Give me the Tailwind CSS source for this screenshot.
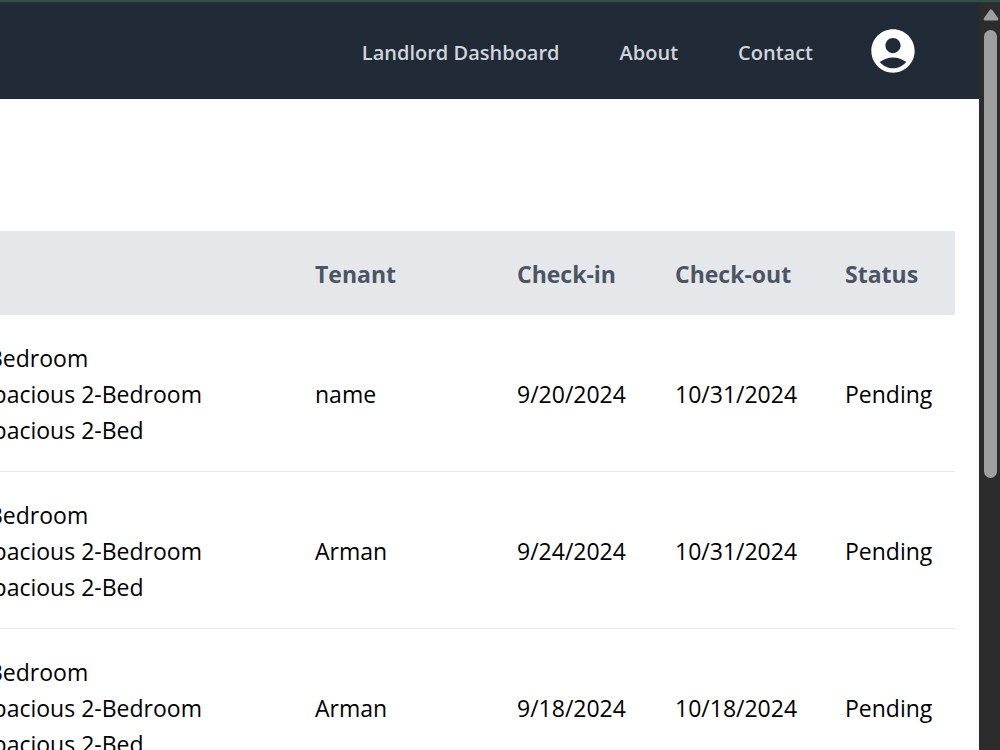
<!DOCTYPE html>
<html lang="en">
<head>
<meta charset="utf-8">
<title>Landlord Dashboard</title>
<script src="https://cdn.jsdelivr.net/npm/@tailwindcss/browser@4"></script>
</head>
<body class="flex h-screen flex-col overflow-hidden bg-white font-['Segoe_UI','Open_Sans',sans-serif] text-black">
  <div class="h-[3px] shrink-0 border-b border-[#26352f] bg-[#2f4f46]"></div>
  <div class="flex min-h-0 flex-1">
    <div class="min-w-0 flex-1 overflow-hidden">
      <header class="flex h-24 items-center justify-end bg-[#212a37] pr-[60px]">
        <nav class="flex items-center gap-[60px] pt-[3px] font-['Segoe_UI','Open_Sans',sans-serif] text-[20px] leading-8 font-semibold text-[#d1d5db]">
          <a href="#dashboard">Landlord Dashboard</a>
          <a href="#about">About</a>
          <a href="#contact">Contact</a>
        </nav>
        <button type="button" aria-label="Account" class="ml-[54px] text-white">
          <svg class="block size-[52px]" viewBox="0 0 24 24" fill="currentColor" aria-hidden="true"><path d="M12 2C6.480 2 2 6.480 2 12s4.480 10 10 10 10-4.480 10-10S17.520 2 12 2zM12 6c1.930 0 3.500 1.570 3.500 3.500S13.930 13 12 13s-3.500-1.570-3.500-3.500S10.070 6 12 6zm0 14c-2.030 0-4.430-.820-6.140-2.880C7.550 15.800 9.680 15 12 15s4.450.800 6.140 2.120C16.430 19.180 14.030 20 12 20z"/></svg>
        </button>
      </header>
      <main class="pt-[132px] pr-6">
        <table class="w-full table-fixed border-collapse text-left text-[23px] leading-9">
          <colgroup><col><col class="w-[202px]"><col class="w-[158px]"><col class="w-[170px]"><col class="w-[134px]"></colgroup>
          <thead class="bg-[#e5e7eb] text-[#4b5563]">
            <tr>
              <td class="px-6"></td>
              <th scope="col" class="px-6 pt-[25px] pb-[23px] font-bold">Tenant</th>
              <th scope="col" class="px-6 pt-[25px] pb-[23px] font-bold">Check-in</th>
              <th scope="col" class="px-6 pt-[25px] pb-[23px] font-bold whitespace-nowrap">Check-out</th>
              <th scope="col" class="px-6 pt-[25px] pb-[23px] font-bold">Status</th>
            </tr>
          </thead>
          <tbody>
            <tr class="border-b border-[#e5e7eb]">
              <td class="pt-[25px] pb-[23px]"><div class="-ml-5"><div class="pl-2">Bedroom</div>Spacious 2-Bedroom<br>Spacious 2-Bed</div></td>
              <td class="px-6 pt-[25px] pb-[23px]">name</td><td class="px-6 pt-[25px] pb-[23px]">9/20/2024</td><td class="px-6 pt-[25px] pb-[23px]">10/31/2024</td><td class="px-6 pt-[25px] pb-[23px]">Pending</td>
            </tr>
            <tr class="border-b border-[#e5e7eb]">
              <td class="pt-[25px] pb-[23px]"><div class="-ml-5"><div class="pl-2">Bedroom</div>Spacious 2-Bedroom<br>Spacious 2-Bed</div></td>
              <td class="px-6 pt-[25px] pb-[23px]">Arman</td><td class="px-6 pt-[25px] pb-[23px]">9/24/2024</td><td class="px-6 pt-[25px] pb-[23px]">10/31/2024</td><td class="px-6 pt-[25px] pb-[23px]">Pending</td>
            </tr>
            <tr class="border-b border-[#e5e7eb]">
              <td class="pt-[25px] pb-[23px]"><div class="-ml-5"><div class="pl-2">Bedroom</div>Spacious 2-Bedroom<br>Spacious 2-Bed</div></td>
              <td class="px-6 pt-[25px] pb-[23px]">Arman</td><td class="px-6 pt-[25px] pb-[23px]">9/18/2024</td><td class="px-6 pt-[25px] pb-[23px]">10/18/2024</td><td class="px-6 pt-[25px] pb-[23px]">Pending</td>
            </tr>
          </tbody>
        </table>
      </main>
    </div>
    <div class="flex w-[21px] shrink-0 flex-col items-center gap-[9px] bg-[#2c2c2c] pt-1.5 pl-0.5" aria-hidden="true">
      <svg class="block h-3 w-4 shrink-0" viewBox="0 0 16 12" fill="#9f9f9f"><path d="M6.700 1Q8-.300 9.300 1L15 9Q16 11.500 14 11.500H2Q0 11.500 1 9Z"/></svg>
      <div class="h-[448px] w-[13px] rounded-full bg-[#9f9f9f]"></div>
    </div>
  </div>
</body>
</html>
